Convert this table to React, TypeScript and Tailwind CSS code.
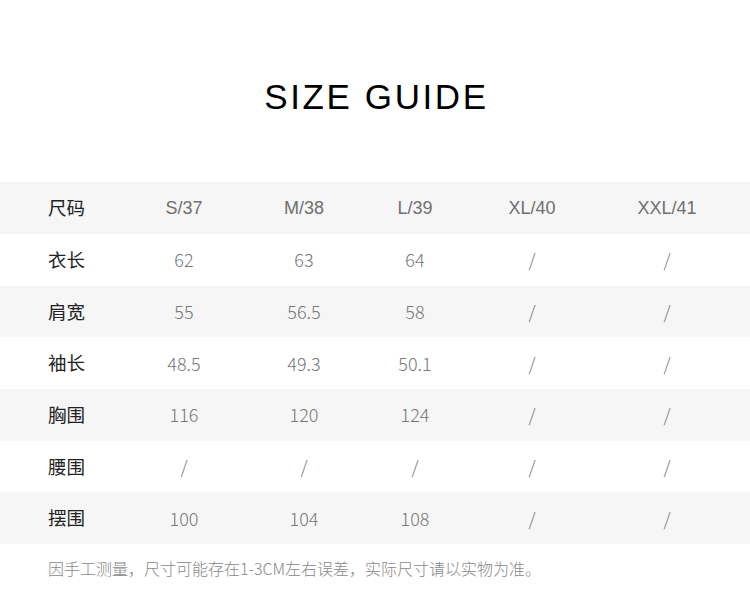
import React from "react";

const header = ["尺码", "S/37", "M/38", "L/39", "XL/40", "XXL/41"];
const rows: string[][] = [
  ["衣长", "62", "63", "64", "/", "/"],
  ["肩宽", "55", "56.5", "58", "/", "/"],
  ["袖长", "48.5", "49.3", "50.1", "/", "/"],
  ["胸围", "116", "120", "124", "/", "/"],
  ["腰围", "/", "/", "/", "/", "/"],
  ["摆围", "100", "104", "108", "/", "/"],
];

const cols = "grid grid-cols-[124px_120px_120px_102px_132px_138px] items-center";
const cjk = "font-['Noto_Sans_CJK_SC','Noto_Sans',sans-serif]";
const latin = "font-['Liberation_Sans',Arial,sans-serif]";

export default function App() {
  return (
    <div className="w-[750px] h-[605px] bg-white overflow-hidden">
      <div className="h-[182px] flex items-start justify-center pt-[77px]">
        <h1 className={`${latin} text-[35px] leading-[40px] text-black tracking-[2.6px] pl-[3px]`}>
          SIZE GUIDE
        </h1>
      </div>
      <div className="flex flex-col">
        <div className={`${cols} h-[52px] bg-[#f6f6f6]`}>
          {header.map((h, i) =>
            i === 0 ? (
              <div key={i} className={`${cjk} pl-[48px] text-[18.5px] text-[#222]`}>
                {h}
              </div>
            ) : (
              <div key={i} className={`${latin} text-center text-[18px] text-[#707070]`}>
                {h}
              </div>
            )
          )}
        </div>
        {rows.map((r, ri) => (
          <div
            key={ri}
            className={`${cols} h-[51.7px] ${ri % 2 === 1 ? "bg-[#f6f6f6]" : "bg-white"}`}
          >
            {r.map((c, ci) =>
              ci === 0 ? (
                <div key={ci} className={`${cjk} pl-[48px] text-[18.5px] text-[#222]`}>
                  {c}
                </div>
              ) : (
                <div key={ci} className={`${cjk} text-center text-[18px] text-[#777] font-light`}>
                  {c}
                </div>
              )
            )}
          </div>
        ))}
      </div>
      <div className={`${cjk} pl-[48px] pt-[12px] text-[16px] text-[#888] font-light`}>
        因手工测量，尺寸可能存在1-3CM左右误差，实际尺寸请以实物为准。
      </div>
    </div>
  );
}
